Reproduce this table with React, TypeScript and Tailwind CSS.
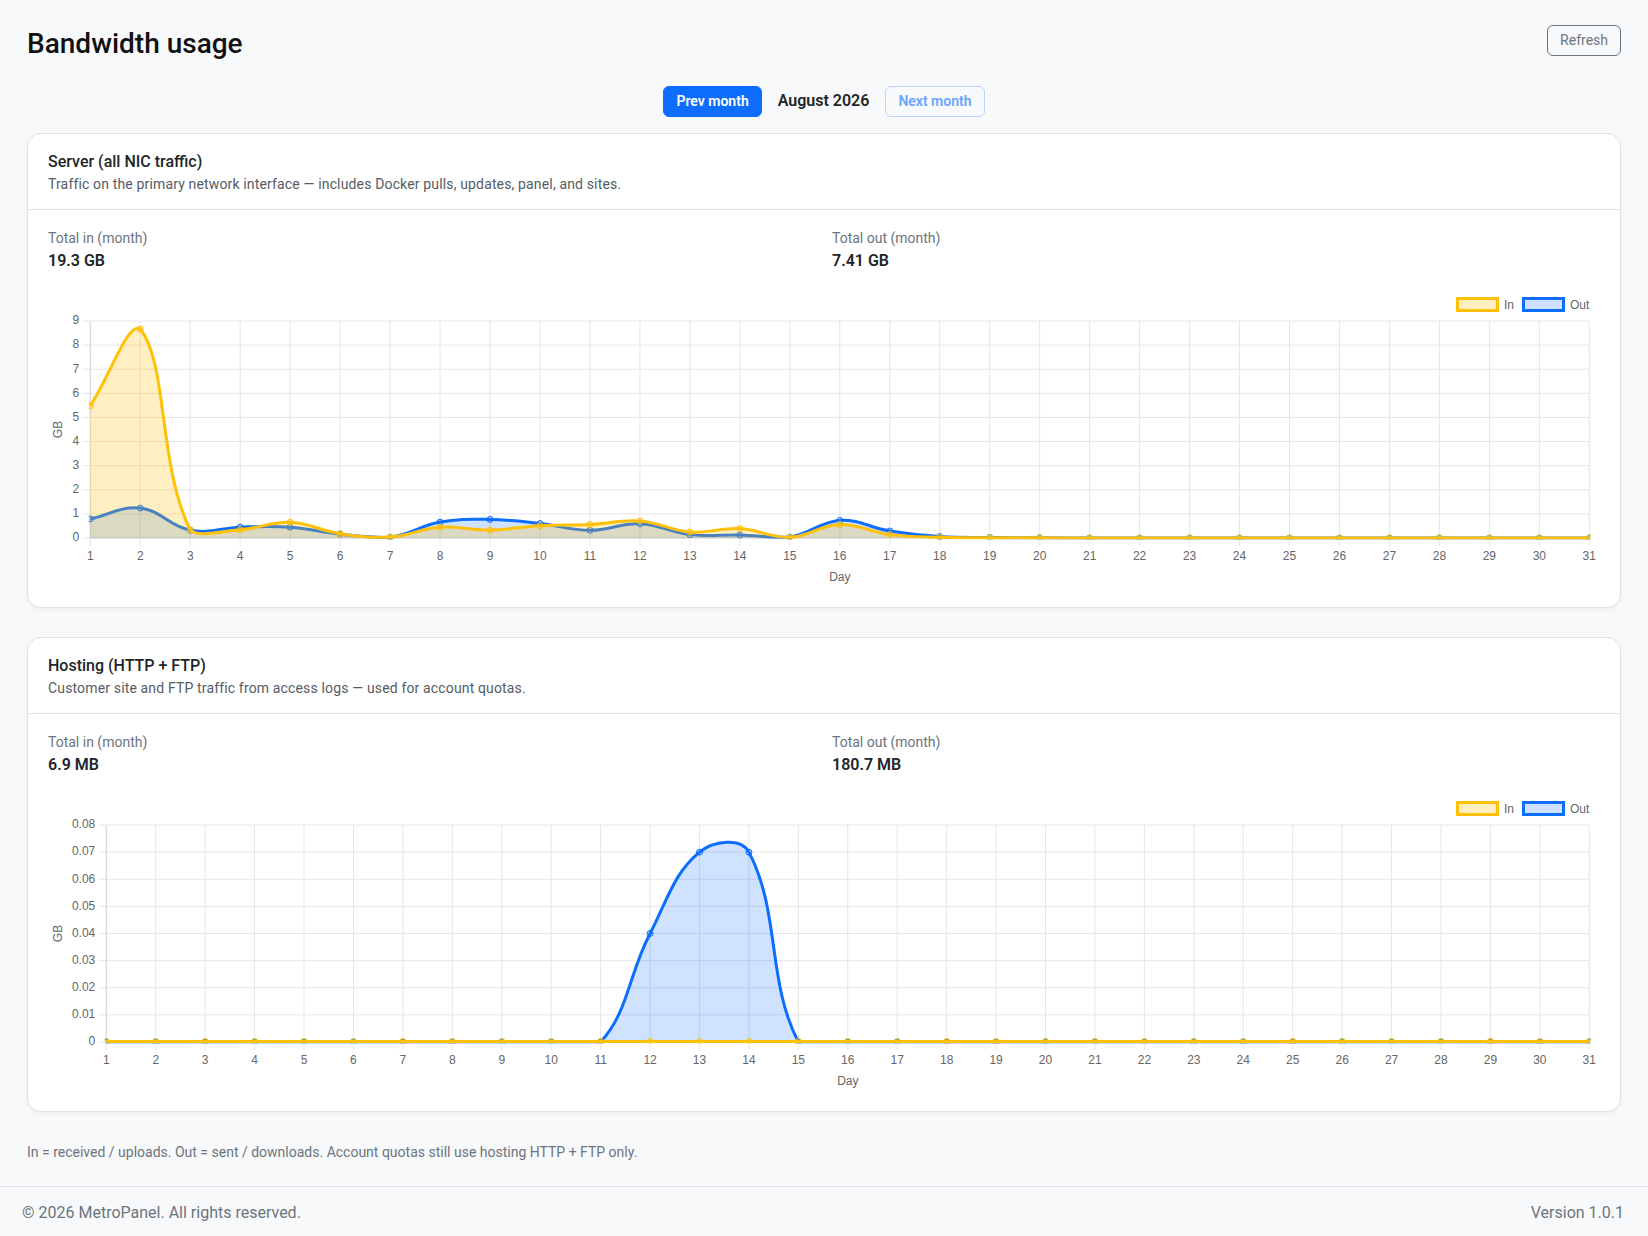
import React from "react";

type Pt = { x: number; y: number };
type Area = { left: number; right: number; top: number; bottom: number };

const W = 1552;
const H = 298;
const PLOT_TOP = 32;
const PLOT_BOTTOM = 249;
const PLOT_RIGHT = 1541.3;

const IN_COLOR = "#ffc107";
const IN_FILL = "rgba(255,193,7,0.25)";
const OUT_COLOR = "#0d6efd";
const OUT_FILL = "rgba(13,110,253,0.2)";

const DAYS = Array.from({ length: 31 }, (_, i) => i + 1);
const zeros = (n: number) => Array.from({ length: n }, () => 0);

const serverIn = [
  5.48, 8.67, 0.34, 0.34, 0.65, 0.18, 0.04, 0.45, 0.33, 0.51, 0.56, 0.71, 0.25, 0.39, 0.03,
  0.56, 0.14, 0.03, 0.01, 0.01, ...zeros(11),
];
const serverOut = [
  0.79, 1.24, 0.32, 0.45, 0.45, 0.16, 0.03, 0.66, 0.77, 0.6, 0.32, 0.59, 0.14, 0.12, 0.04,
  0.73, 0.29, 0.06, 0.02, 0.01, ...zeros(11),
];
const hostingIn = Array.from({ length: 31 }, () => 0.0002);
const hostingOut = [...zeros(11), 0.04, 0.07, 0.07, ...zeros(17)];

const clamp = (v: number, min: number, max: number) => Math.max(Math.min(v, max), min);

// same control points as chart.js splineCurve (tension 0.4, capped to the chart area)
function splinePath(pts: Pt[], area: Area, tension = 0.4) {
  const ctrl = pts.map((cur, i) => {
    const prev = pts[i - 1] ?? cur;
    const next = pts[i + 1] ?? cur;
    const d01 = Math.hypot(cur.x - prev.x, cur.y - prev.y);
    const d12 = Math.hypot(next.x - cur.x, next.y - cur.y);
    let s01 = d01 / (d01 + d12);
    let s12 = d12 / (d01 + d12);
    s01 = isNaN(s01) ? 0 : s01;
    s12 = isNaN(s12) ? 0 : s12;
    const fa = tension * s01;
    const fb = tension * s12;
    return {
      c1: {
        x: clamp(cur.x - fa * (next.x - prev.x), area.left, area.right),
        y: clamp(cur.y - fa * (next.y - prev.y), area.top, area.bottom),
      },
      c2: {
        x: clamp(cur.x + fb * (next.x - prev.x), area.left, area.right),
        y: clamp(cur.y + fb * (next.y - prev.y), area.top, area.bottom),
      },
    };
  });
  let d = `M${pts[0].x},${pts[0].y}`;
  for (let i = 1; i < pts.length; i++) {
    const a = ctrl[i - 1].c2;
    const b = ctrl[i].c1;
    d += ` C${a.x},${a.y} ${b.x},${b.y} ${pts[i].x},${pts[i].y}`;
  }
  return d;
}

interface ChartProps {
  id: string;
  inData: number[];
  outData: number[];
  yMax: number;
  yStep: number;
  decimals: number;
  plotLeft: number;
}

function BandwidthChart({ id, inData, outData, yMax, yStep, decimals, plotLeft }: ChartProps) {
  const area: Area = { left: plotLeft, right: PLOT_RIGHT, top: PLOT_TOP, bottom: PLOT_BOTTOM };
  const step = (PLOT_RIGHT - plotLeft) / 30;
  const xOf = (i: number) => plotLeft + i * step;
  const yOf = (v: number) => PLOT_BOTTOM - (v / yMax) * (PLOT_BOTTOM - PLOT_TOP);
  const tickCount = Math.round(yMax / yStep);
  const ticks = Array.from({ length: tickCount + 1 }, (_, i) => i * yStep);
  const font = "'Liberation Sans', Arial, sans-serif";

  const series = [
    { data: outData, color: OUT_COLOR, fill: OUT_FILL },
    { data: inData, color: IN_COLOR, fill: IN_FILL },
  ];

  return (
    <svg viewBox={`0 0 ${W} ${H}`} width="100%" height={H} className="block">
      <defs>
        <clipPath id={`${id}-clip`}>
          <rect
            x={plotLeft - 1.5}
            y={PLOT_TOP - 1.5}
            width={PLOT_RIGHT - plotLeft + 3}
            height={PLOT_BOTTOM - PLOT_TOP + 3}
          />
        </clipPath>
      </defs>

      {/* legend */}
      <rect x={1409.5} y={9.5} width={40} height={12} fill={IN_FILL} stroke={IN_COLOR} strokeWidth={3} />
      <text x={1456} y={19.5} fontSize={12} fill="#666" fontFamily={font}>
        In
      </text>
      <rect x={1475.5} y={9.5} width={40} height={12} fill={OUT_FILL} stroke={OUT_COLOR} strokeWidth={3} />
      <text x={1522} y={19.5} fontSize={12} fill="#666" fontFamily={font}>
        Out
      </text>

      {/* grid */}
      {ticks.map((t) => (
        <line
          key={`h${t}`}
          x1={plotLeft - 8}
          x2={PLOT_RIGHT}
          y1={yOf(t)}
          y2={yOf(t)}
          stroke="#e6e6e6"
          strokeWidth={1}
        />
      ))}
      {DAYS.map((d, i) => (
        <line
          key={`v${d}`}
          x1={xOf(i)}
          x2={xOf(i)}
          y1={PLOT_TOP}
          y2={PLOT_BOTTOM + 8}
          stroke="#e6e6e6"
          strokeWidth={1}
        />
      ))}
      <line x1={plotLeft} x2={plotLeft} y1={PLOT_TOP} y2={PLOT_BOTTOM} stroke="#d6d6d6" />
      <line x1={plotLeft} x2={PLOT_RIGHT} y1={PLOT_BOTTOM} y2={PLOT_BOTTOM} stroke="#d6d6d6" />

      {/* y ticks */}
      {ticks.map((t) => (
        <text
          key={`yl${t}`}
          x={plotLeft - 11}
          y={yOf(t) + 3.3}
          textAnchor="end"
          fontSize={12}
          fill="#666"
          fontFamily={font}
        >
          {t === 0 ? "0" : t.toFixed(decimals)}
        </text>
      ))}
      <text
        transform={`translate(14.3 ${(PLOT_TOP + PLOT_BOTTOM) / 2}) rotate(-90)`}
        textAnchor="middle"
        fontSize={12}
        fill="#666"
        fontFamily={font}
      >
        GB
      </text>

      {/* x ticks */}
      {DAYS.map((d, i) => (
        <text
          key={`xl${d}`}
          x={xOf(i)}
          y={271}
          textAnchor="middle"
          fontSize={12}
          fill="#666"
          fontFamily={font}
        >
          {d}
        </text>
      ))}
      <text
        x={(plotLeft + PLOT_RIGHT) / 2}
        y={291.5}
        textAnchor="middle"
        fontSize={12}
        fill="#666"
        fontFamily={font}
      >
        Day
      </text>

      {/* datasets: out first, in drawn on top */}
      <g clipPath={`url(#${id}-clip)`}>
        {series.map((s, si) => {
          const pts = s.data.map((v, i) => ({ x: xOf(i), y: yOf(v) }));
          const line = splinePath(pts, area);
          const fillPath = `${line} L${pts[pts.length - 1].x},${PLOT_BOTTOM} L${pts[0].x},${PLOT_BOTTOM} Z`;
          return (
            <g key={si}>
              <path d={fillPath} fill={s.fill} stroke="none" />
              <path d={line} fill="none" stroke={s.color} strokeWidth={3} strokeLinejoin="round" />
              {pts.map((p, i) => (
                <circle key={i} cx={p.x} cy={p.y} r={3} fill={s.fill} stroke={s.color} strokeWidth={1} />
              ))}
            </g>
          );
        })}
      </g>
    </svg>
  );
}

interface CardProps {
  title: string;
  subtitle: string;
  totalIn: string;
  totalOut: string;
  children: React.ReactNode;
}

function UsageCard({ title, subtitle, totalIn, totalOut, children }: CardProps) {
  return (
    <section className="rounded-[14px] border border-[#dee2e6] bg-white shadow-[0_2px_4px_rgba(0,0,0,0.05)]">
      <div className="border-b border-[#dee2e6] px-5 pt-4 pb-3.5">
        <h2 className="text-base leading-6 font-medium text-[#212529]">{title}</h2>
        <p className="text-sm leading-[21px] tracking-[0.15px] text-[#555c63]">{subtitle}</p>
      </div>
      <div className="px-5 pt-[18px] pb-5">
        <div className="mb-4 grid grid-cols-2 gap-4">
          <div>
            <div className="text-sm leading-[21px] text-[#6c757d]">Total in (month)</div>
            <div className="text-base leading-6 font-semibold">{totalIn}</div>
          </div>
          <div>
            <div className="text-sm leading-[21px] text-[#6c757d]">Total out (month)</div>
            <div className="text-base leading-6 font-semibold">{totalOut}</div>
          </div>
        </div>
        {children}
      </div>
    </section>
  );
}

export default function App() {
  return (
    <div className="flex min-h-screen flex-col bg-[#f8f9fa] font-[Roboto,'Liberation_Sans',sans-serif] text-[#212529]">
      <main className="flex-1 px-[27px] pt-[25px]">
        <div className="flex items-start justify-between">
          <h1 className="mt-[2px] text-[28px] leading-[1.2] font-medium text-[#111]">Bandwidth usage</h1>
          <button className="rounded-md border border-[#6c757d] px-3 py-1 text-sm leading-[21px] text-[#6c757d]">
            Refresh
          </button>
        </div>

        <div className="mt-[25px] mb-4 flex items-center justify-center gap-4">
          <button className="rounded-md border border-[#0d6efd] bg-[#0d6efd] px-3 py-1 text-sm leading-[21px] font-semibold text-white">
            Prev month
          </button>
          <span className="text-base leading-6 font-semibold">August 2026</span>
          <button
            disabled
            className="rounded-md border border-[#b6d4fe] px-3 py-1 text-sm leading-[21px] font-semibold text-[#6aa5fd]"
          >
            Next month
          </button>
        </div>

        <UsageCard
          title="Server (all NIC traffic)"
          subtitle="Traffic on the primary network interface — includes Docker pulls, updates, panel, and sites."
          totalIn="19.3 GB"
          totalOut="7.41 GB"
        >
          <BandwidthChart
            id="server"
            inData={serverIn}
            outData={serverOut}
            yMax={9}
            yStep={1}
            decimals={0}
            plotLeft={42.3}
          />
        </UsageCard>

        <div className="mt-[29px]">
          <UsageCard
            title="Hosting (HTTP + FTP)"
            subtitle="Customer site and FTP traffic from access logs — used for account quotas."
            totalIn="6.9 MB"
            totalOut="180.7 MB"
          >
            <BandwidthChart
              id="hosting"
              inData={hostingIn}
              outData={hostingOut}
              yMax={0.08}
              yStep={0.01}
              decimals={2}
              plotLeft={58.3}
            />
          </UsageCard>
        </div>

        <p className="mt-[30px] text-sm leading-[21px] text-[#6c757d]">
          In = received / uploads. Out = sent / downloads. Account quotas still use hosting HTTP + FTP only.
        </p>
      </main>

      <footer className="mt-[23px] flex items-center justify-between border-t border-[#dee2e6] pt-[14px] pr-6 pb-3 pl-[22px] text-base leading-6 text-[#6c757d]">
        <span>© 2026 MetroPanel. All rights reserved.</span>
        <span>Version 1.0.1</span>
      </footer>
    </div>
  );
}
